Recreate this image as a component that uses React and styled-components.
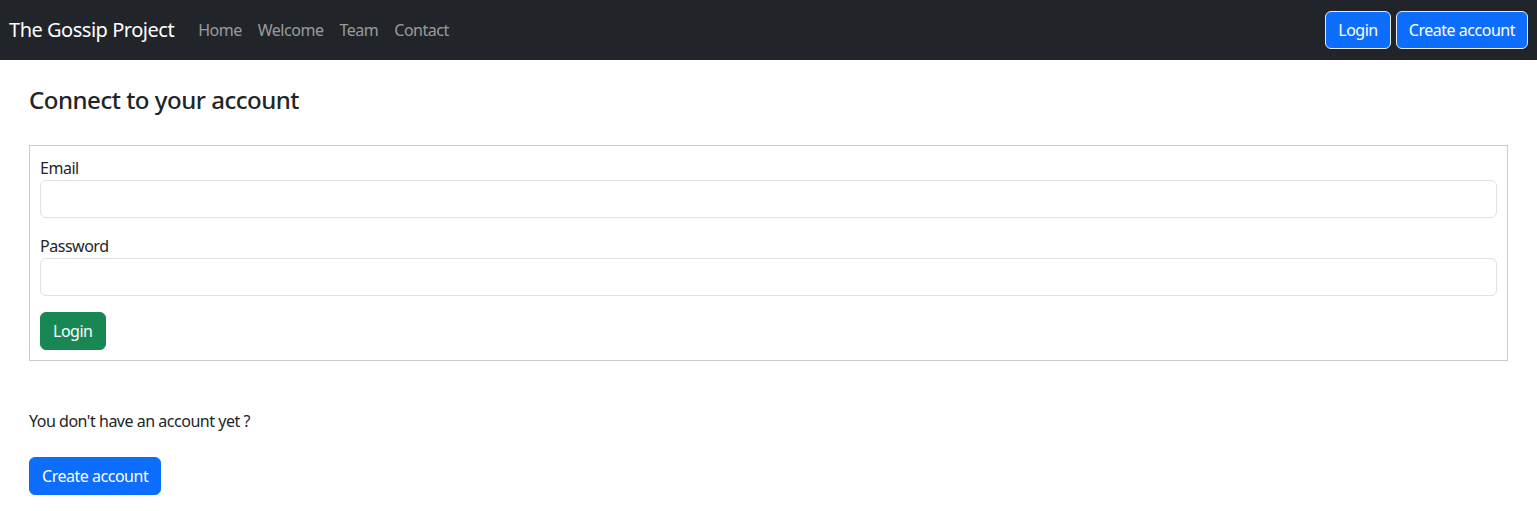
import React from 'react';
import styled, { createGlobalStyle } from 'styled-components';

const NAV_LINKS = ['Home', 'Welcome', 'Team', 'Contact'];

const GlobalStyle = createGlobalStyle`
  * {
    box-sizing: border-box;
  }

  body {
    margin: 0;
    font-family: 'Noto Sans', 'Open Sans', sans-serif;
    font-size: 16px;
    letter-spacing: -0.03em;
    color: #212529;
    background-color: #fff;
  }
`;

const App = () => {
  return (
    <>
      <GlobalStyle />
      <Navbar>
        <NavLeft>
          <Brand href="#">The Gossip Project</Brand>
          <NavList>
            {NAV_LINKS.map((link) => (
              <li key={link}>
                <NavLink href="#">{link}</NavLink>
              </li>
            ))}
          </NavList>
        </NavLeft>
        <NavRight>
          <Button variant="primary" bordered type="button">
            Login
          </Button>
          <Button variant="primary" bordered type="button">
            Create account
          </Button>
        </NavRight>
      </Navbar>

      <Main>
        <Title>Connect to your account</Title>
        <FormBox>
          <Field>
            <Label htmlFor="email">Email</Label>
            <Input id="email" type="email" />
          </Field>
          <Field>
            <Label htmlFor="password">Password</Label>
            <Input id="password" type="password" />
          </Field>
          <Button variant="success" type="submit">
            Login
          </Button>
        </FormBox>

        <Hint>You don't have an account yet ?</Hint>
        <Button variant="primary" type="button">
          Create account
        </Button>
      </Main>
    </>
  );
};

export default App;

const COLORS = {
  primary: '#0d6efd',
  success: '#198754',
};

const Navbar = styled.nav`
  display: flex;
  justify-content: space-between;
  align-items: center;
  height: 60px;
  padding: 0 9px;
  background-color: #212529;
`;

const NavLeft = styled.div`
  display: flex;
  align-items: center;
`;

const Brand = styled.a`
  margin-right: 16px;
  font-size: 20px;
  line-height: 30px;
  color: #fff;
  text-decoration: none;
`;

const NavList = styled.ul`
  display: flex;
  margin: 0;
  padding: 0;
  list-style: none;
`;

const NavLink = styled.a`
  display: block;
  padding: 8px;
  font-size: 16px;
  line-height: 24px;
  color: rgba(255, 255, 255, 0.55);
  text-decoration: none;
`;

const NavRight = styled.div`
  display: flex;
  gap: 5px;
`;

const Button = styled.button`
  display: inline-block;
  height: 38px;
  padding: 0 12px;
  border: 1px solid
    ${(props) => (props.bordered ? '#e9ecef' : COLORS[props.variant])};
  border-radius: 6px;
  background-color: ${(props) => COLORS[props.variant]};
  color: #fff;
  font-family: inherit;
  font-size: 16px;
  letter-spacing: inherit;
  line-height: 24px;
  cursor: pointer;
`;

const Main = styled.main`
  padding: 26px 29px 0;
`;

const Title = styled.h4`
  margin: 0 0 30px;
  font-size: 24px;
  font-weight: 500;
  line-height: 1.2;
`;

const FormBox = styled.form`
  display: flex;
  flex-direction: column;
  align-items: flex-start;
  gap: 16px;
  padding: 10px;
  border: 1px solid #cbcbcb;
`;

const Field = styled.div`
  display: flex;
  flex-direction: column;
  align-self: stretch;
`;

const Label = styled.label`
  font-size: 16px;
  line-height: 24px;
`;

const Input = styled.input`
  height: 38px;
  padding: 6px 12px;
  border: 1px solid #dee2e6;
  border-radius: 6px;
  font-family: inherit;
  font-size: 16px;
  outline: 0;
`;

const Hint = styled.p`
  margin: 48px 0 24px;
  font-size: 16px;
  line-height: 24px;
`;
